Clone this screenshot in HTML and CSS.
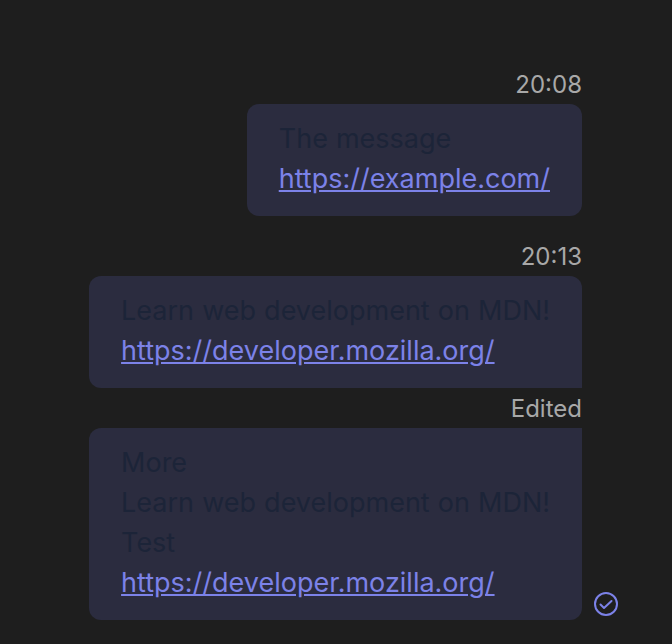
FILE: index.html
```html
<!DOCTYPE html>
<html lang="en">
<head>
<meta charset="utf-8">
<title>Messages</title>
<link rel="stylesheet" href="styles.css">
</head>
<body>
<main class="thread">
  <div class="group">
    <div class="meta">20:08</div>
    <div class="row">
      <div class="bubble">
        <p>The message</p>
        <p><a href="#">https://example.com/</a></p>
      </div>
    </div>
  </div>
  <div class="group">
    <div class="meta">20:13</div>
    <div class="row">
      <div class="bubble joined-bottom">
        <p>Learn web development on MDN!</p>
        <p><a href="#">https://developer.mozilla.org/</a></p>
      </div>
    </div>
  </div>
  <div class="group tight">
    <div class="meta">Edited</div>
    <div class="row">
      <div class="bubble joined-top">
        <p>More</p>
        <p>Learn web development on MDN!</p>
        <p>Test</p>
        <p><a href="#">https://developer.mozilla.org/</a></p>
      </div>
      <svg class="status" viewBox="0 0 24 24" width="24" height="24" fill="none" stroke="#7c82e8" stroke-width="2" stroke-linecap="round" stroke-linejoin="round" aria-hidden="true">
        <circle cx="12" cy="12" r="11"/>
        <path d="M6.5 12.5L10 16l7.5-7"/>
      </svg>
    </div>
  </div>
</main>
</body>
</html>
```
FILE: styles.css
```css
html, body {
  margin: 0;
  padding: 0;
  background: #1e1e1e;
}
body {
  font-family: Inter, "Liberation Sans", sans-serif;
  height: 644px;
  overflow: hidden;
}
.thread {
  display: flex;
  flex-direction: column;
  align-items: flex-end;
  padding: 68px 90px 0 0;
}
.group {
  display: flex;
  flex-direction: column;
  align-items: flex-end;
}
.group + .group {
  margin-top: 24px;
}
.group.tight {
  margin-top: 4px;
}
.meta {
  color: #a8a8a8;
  font-size: 24px;
  line-height: 34px;
  height: 36px;
}
.row {
  position: relative;
}
.bubble {
  background: #2b2c3f;
  border-radius: 12px;
  padding: 15px 32px 17px;
  color: #1c2438;
  font-size: 27px;
  line-height: 40px;
  word-spacing: 0.5px;
}
.bubble.joined-bottom {
  border-bottom-right-radius: 0;
}
.bubble.joined-top {
  border-top-right-radius: 0;
}
.bubble p {
  margin: 0;
}
.bubble a {
  color: #7c82e8;
}
.status {
  position: absolute;
  right: -36px;
  bottom: 4px;
}
```
